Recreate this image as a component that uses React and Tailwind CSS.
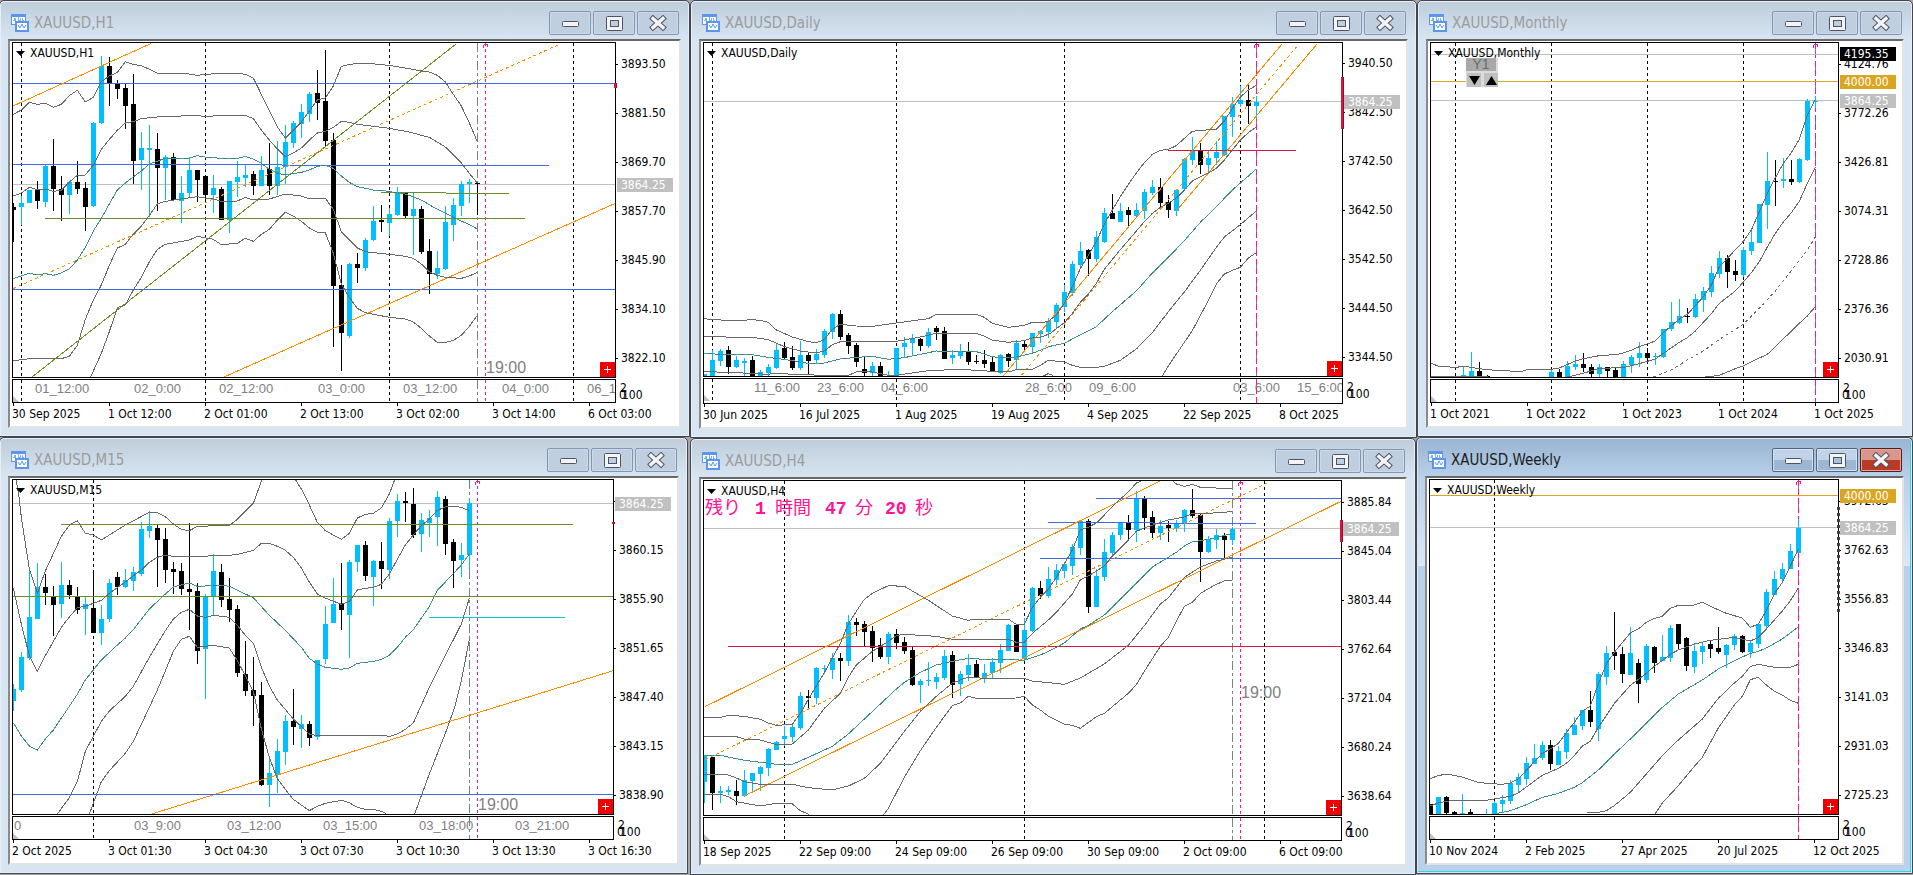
import React from 'react';
import clsx from 'clsx';

const BLUE = '#4169e1';
const OLIVE = '#6b8e23';
const ORANGE = '#ff8c00';
const CRIMSON = '#dc143c';
const SILVER = '#c0c0c0';
const GOLD = '#daa520';
const PINK = '#ff1493';
const BAND = '#696969';

// Candles are 8px apart. Series values are stored in thirds of a pixel,
// measured from each chart's own origin.
const STEP = 8;
const UNIT = 3;
const FAR = 4000;

// candle: [up, high, bodyTop, bodyBottom, low]
// line: [color, x1, y1, x2, y2, dashed]
const H1 = {
  symbol: 'XAUUSD,H1',
  origin: [39, 129],
  prices: ['3893.50', '3881.50', '3869.70', '3857.70', '3845.90', '3834.10', '3822.10'],
  tags: [{ text: '3864.25', top: 136, bg: SILVER }],
  mark: { top: 41, height: 5 },
  dates: ['30 Sep 2025', '1 Oct 12:00', '2 Oct 01:00', '2 Oct 13:00', '3 Oct 02:00', '3 Oct 14:00', '6 Oct 03:00'],
  periods: [1, 24, 47, 70],
  nowSlot: 58,
  nextSlot: 59,
  clock: { text: '19:00', x: 473, y: 330 },
  subLabels: [[22, '01_12:00'], [121, '02_0:00'], [206, '02_12:00'], [305, '03_0:00'], [390, '03_12:00'], [489, '04_0:00'], [574, '06_12:00']],
  priceLines: [553],
  candles: [
    [0, 609, 621, 630, 725], [1, 588, 609, 621, 674], [1, 570, 570, 609, 609], [0, 543, 570, 603, 627],
    [1, 492, 498, 606, 621], [0, 417, 498, 567, 633], [0, 528, 567, 585, 663], [1, 545, 545, 585, 642],
    [0, 483, 545, 567, 582], [0, 546, 564, 621, 693], [1, 366, 369, 618, 621], [1, 168, 197, 369, 372],
    [0, 171, 198, 249, 318], [0, 240, 250, 266, 297], [0, 252, 264, 318, 387], [0, 222, 312, 483, 552],
    [1, 396, 444, 480, 570], [1, 375, 444, 450, 650], [0, 399, 447, 503, 633], [1, 465, 471, 503, 600],
    [0, 459, 471, 601, 602], [1, 528, 579, 603, 669], [1, 472, 510, 579, 591], [0, 510, 510, 540, 606],
    [0, 528, 528, 585, 606], [1, 525, 564, 585, 639], [0, 561, 567, 660, 660], [1, 543, 543, 660, 699],
    [1, 483, 531, 546, 591], [1, 495, 525, 534, 561], [0, 513, 522, 558, 585], [1, 468, 510, 558, 558],
    [0, 429, 507, 558, 585], [1, 423, 501, 558, 585], [1, 375, 426, 502, 552], [1, 363, 369, 429, 444],
    [1, 312, 336, 372, 414], [1, 276, 282, 342, 366], [0, 210, 279, 309, 360], [0, 150, 303, 423, 438],
    [0, 399, 420, 858, 1041], [0, 795, 855, 999, 1113], [1, 789, 792, 1008, 1014], [0, 759, 792, 804, 849],
    [1, 714, 720, 804, 813], [1, 618, 663, 720, 723], [0, 615, 660, 666, 696], [1, 624, 642, 669, 708],
    [1, 561, 576, 645, 648], [0, 576, 576, 648, 654], [1, 579, 627, 648, 765], [0, 618, 627, 756, 762],
    [0, 717, 753, 822, 882], [1, 753, 804, 822, 837], [1, 618, 666, 807, 810], [1, 594, 615, 675, 723],
    [1, 543, 552, 618, 648], [1, 537, 546, 552, 609], [0, 549, 549, 552, 645],
  ],
  lines: [
    [BLUE, 39, 250, FAR, 250], [BLUE, 39, 493, 846, 493], [BLUE, 846, 496, 1647, 496], [BLUE, 39, 868, FAR, 868],
    [OLIVE, 135, 655, 1575, 655], [OLIVE, 1143, 577, 1338, 577], [OLIVE, 1338, 580, 1527, 580],
    [OLIVE, 96, 1131, 1368, 132], [ORANGE, 39, 318, 452, 131], [ORANGE, 672, 1131, 1848, 609],
    [ORANGE, 39, 866, 1683, 131, true],
  ],
  bands: [
    '40,343 64,330 88,307 112,313 136,310 160,322 184,313 208,287 232,271 256,306 280,292 304,245 328,228 352,217 376,185 400,193 424,197 448,208 472,220 568,222 592,226 616,223 664,220 712,220 736,223 760,234 832,381 856,414 904,366 952,300 976,294 1000,258 1024,199 1048,193 1080,190 1108,190 1140,194 1168,196 1216,204 1260,212 1288,216 1312,226 1336,246 1360,283 1384,318 1408,369 1432,425',
    '40,588 64,579 88,562 112,569 136,567 160,574 184,571 208,546 232,526 256,525 280,495 304,448 328,418 352,391 376,369 400,365 424,356 448,353 496,349 544,348 592,346 616,350 664,346 736,346 760,356 784,390 808,420 832,447 856,471 880,459 904,444 928,420 952,399 976,394 1000,382 1024,364 1048,367 1072,373 1120,379 1168,385 1216,394 1240,399 1264,406 1288,412 1336,441 1384,489 1408,520 1432,549',
    '40,1082 88,1076 184,1076 208,1069 232,1036 256,958 280,900 304,855 328,796 352,744 376,733 400,702 424,678 448,646 472,612 496,604 544,597 592,590 616,594 640,596 664,604 712,603 736,592 760,600 808,597 856,582 904,588 928,597 976,595 1000,628 1024,695 1048,720 1072,744 1096,755 1168,763 1216,769 1240,775 1264,792 1288,815 1312,826 1336,832 1384,835 1408,828 1432,817',
    '272,1131 304,1060 328,995 352,923 376,915 400,870 424,832 448,786 472,748 496,733 568,720 592,709 640,718 664,734 712,730 736,715 760,724 784,703 808,688 832,660 856,636 880,648 904,664 928,684 952,696 976,698 1000,760 1024,852 1048,892 1072,925 1096,938 1168,952 1216,957 1240,966 1264,985 1288,1008 1312,1027 1336,1027 1360,1021 1384,1006 1408,979 1432,946',
  ],
  mid: '40,836 88,820 112,824 136,821 160,826 184,819 208,807 232,780 256,742 280,693 304,655 328,612 352,570 376,549 400,531 424,513 448,492 472,484 496,474 568,474 592,467 616,471 664,475 712,475 736,469 760,477 784,490 808,508 832,520 856,525 904,517 928,510 952,499 976,496 1000,505 1024,528 1048,547 1072,560 1096,565 1120,570 1144,570 1168,575 1216,582 1264,600 1312,628 1360,652 1408,674 1432,687',
};

const DAILY = {
  symbol: 'XAUUSD,Daily',
  origin: [42, 129],
  prices: ['3940.50', '3842.50', '3742.50', '3642.50', '3542.50', '3444.50', '3344.50'],
  pricesHigh: true,
  tags: [{ text: '3864.25', top: 53, bg: SILVER }],
  mark: { top: 35, height: 52 },
  dates: ['30 Jun 2025', '16 Jul 2025', '1 Aug 2025', '19 Aug 2025', '4 Sep 2025', '22 Sep 2025', '8 Oct 2025'],
  periods: [1, 24, 45, 67],
  nowSlot: 69,
  nextSlot: 69,
  subLabels: [[50, '11_6:00'], [113, '23_6:00'], [177, '04_6:00'], [321, '28_6:00'], [385, '09_6:00'], [529, '03_6:00'], [593, '15_6:00']],
  priceLines: [304],
  candles: [
    [1, 1122, 1122, 1140, 1140], [1, 1050, 1080, 1140, 1140], [1, 1047, 1053, 1083, 1098], [0, 1038, 1050, 1101, 1122],
    [1, 1068, 1080, 1101, 1104], [1, 1074, 1083, 1088, 1135], [0, 1068, 1080, 1140, 1140], [1, 1110, 1116, 1140, 1140],
    [1, 1092, 1101, 1119, 1128], [1, 1032, 1050, 1104, 1107], [0, 1026, 1044, 1074, 1077], [0, 1038, 1071, 1104, 1110],
    [1, 1023, 1065, 1104, 1110], [0, 1059, 1065, 1083, 1122], [1, 1047, 1062, 1080, 1092], [1, 987, 993, 1065, 1074],
    [1, 939, 942, 996, 1017], [0, 930, 942, 1011, 1020], [0, 999, 1005, 1038, 1062], [0, 1029, 1035, 1086, 1101],
    [0, 1071, 1107, 1119, 1130], [1, 1086, 1098, 1119, 1130], [0, 1086, 1098, 1140, 1140], [1, 1113, 1140, 1143, 1143],
    [1, 1044, 1044, 1140, 1140], [1, 1011, 1029, 1041, 1074], [1, 1002, 1017, 1029, 1065], [0, 1014, 1017, 1038, 1053],
    [1, 984, 996, 1038, 1044], [0, 978, 984, 996, 1020], [0, 981, 993, 1077, 1077], [1, 1050, 1065, 1074, 1092],
    [1, 1032, 1053, 1068, 1077], [0, 1026, 1053, 1086, 1095], [0, 1065, 1083, 1085, 1092], [0, 1050, 1080, 1092, 1104],
    [0, 1071, 1086, 1113, 1116], [1, 1062, 1065, 1119, 1122], [0, 1059, 1062, 1083, 1101], [1, 1020, 1029, 1080, 1107],
    [0, 1023, 1032, 1041, 1050], [1, 999, 999, 1041, 1059], [1, 990, 993, 1002, 1029], [1, 954, 963, 996, 1014],
    [1, 909, 915, 966, 984], [1, 855, 876, 921, 936], [1, 783, 792, 879, 888], [1, 726, 753, 795, 804],
    [0, 747, 750, 777, 828], [1, 693, 711, 777, 786], [1, 624, 639, 726, 729], [0, 582, 639, 657, 657],
    [1, 609, 633, 666, 666], [0, 621, 630, 645, 678], [1, 609, 630, 648, 654], [1, 567, 576, 633, 657],
    [1, 540, 561, 579, 585], [0, 534, 561, 609, 627], [0, 585, 606, 630, 654], [1, 567, 570, 633, 648],
    [1, 474, 477, 567, 573], [1, 411, 453, 480, 495], [0, 429, 453, 495, 522], [1, 450, 474, 495, 516],
    [1, 423, 456, 474, 495], [1, 348, 348, 465, 468], [1, 291, 312, 351, 411], [1, 258, 300, 312, 321],
    [0, 252, 300, 318, 372], [1, 288, 306, 318, 357],
  ],
  lines: [
    [CRIMSON, 1435, 451, 1818, 451], [ORANGE, 940, 1128, 1776, 132],
    [ORANGE, 995, 1125, 1820, 140, true], [ORANGE, 1459, 633, 1881, 132],
  ],
  bands: [
    '42,956 67,959 139,962 187,959 211,961 235,967 259,990 307,1011 355,1025 379,1028 403,1019 427,988 451,973 499,978 547,979 619,969 715,956 739,943 787,945 859,943 883,952 907,970 955,982 1003,976 1027,967 1051,969 1075,964 1099,945 1123,910 1147,860 1171,806 1195,766 1219,725 1243,672 1267,630 1291,590 1315,553 1339,519 1363,488 1387,463 1411,451 1435,448 1459,437 1483,415 1507,394 1531,391 1579,388 1603,363 1627,326 1651,291 1675,270 1699,256',
    '42,1009 139,1012 187,1012 235,1019 283,1040 331,1053 379,1059 403,1053 427,1034 451,1025 619,1024 691,1011 739,1000 859,1000 883,1008 907,1020 955,1027 1003,1022 1027,1014 1051,1012 1080,1001 1099,986 1123,968 1147,940 1171,907 1195,882 1219,850 1243,808 1291,749 1339,693 1363,665 1387,640 1411,622 1435,610 1459,594 1483,570 1507,543 1555,519 1579,505 1603,480 1627,450 1651,420 1675,398 1699,381',
    '42,1115 120,1117 235,1123 259,1119 307,1123 403,1126 475,1126 499,1116 523,1113 547,1116 595,1126 619,1126 667,1119 715,1112 811,1108 907,1114 955,1116 979,1109 1027,1108 1051,1096 1075,1081 1123,1086 1147,1096 1171,1102 1219,1102 1243,1099 1291,1081 1339,1047 1387,998 1435,935 1483,876 1531,811 1579,742 1603,711 1651,674 1699,633',
    '1060,1128 1075,1121 1090,1127',
    '1417,1128 1435,1098 1483,1027 1507,992 1555,901 1579,852 1603,822 1627,811 1651,802 1675,774 1699,758',
  ],
  mid: '42,1060 91,1063 187,1064 235,1072 331,1085 355,1091 403,1089 451,1077 499,1072 547,1069 595,1078 643,1073 739,1053 859,1055 883,1062 907,1070 931,1073 979,1071 1027,1060 1080,1039 1123,1030 1171,1004 1219,980 1267,935 1339,873 1387,819 1435,772 1483,722 1531,667 1579,620 1627,570 1675,528 1699,507',
};

const MONTHLY = {
  symbol: 'XAUUSD,Monthly',
  origin: [48, 129],
  prices: ['4124.76', '3772.26', '3426.81', '3074.31', '2728.86', '2376.36', '2030.91'],
  tags: [
    { text: '4195.35', top: 5, bg: '#000000' },
    { text: '4000.00', top: 33, bg: GOLD },
    { text: '3864.25', top: 52, bg: SILVER },
  ],
  dates: ['1 Oct 2021', '1 Oct 2022', '1 Oct 2023', '1 Oct 2024', '1 Oct 2025'],
  periods: [3, 15, 27, 39],
  nowSlot: 48,
  nextSlot: 48,
  yearBox: true,
  subLabels: [],
  priceLines: [163, 301],
  candles: [
    null, null, null, null,
    [1, 1098, 1125, 1140, 1140], [1, 1056, 1113, 1140, 1140], [0, 1086, 1113, 1140, 1140], [0, 1125, 1129, 1140, 1140],
    null, null, null, null, null, null, null,
    [1, 1106, 1116, 1140, 1140], [0, 1107, 1116, 1140, 1140], [1, 1083, 1098, 1140, 1140], [1, 1065, 1092, 1101, 1110],
    [0, 1059, 1092, 1104, 1116], [0, 1093, 1101, 1122, 1140], [1, 1092, 1101, 1122, 1131], [0, 1101, 1101, 1113, 1131],
    [0, 1104, 1110, 1140, 1140], [1, 1083, 1092, 1140, 1140], [1, 1065, 1071, 1095, 1119], [1, 1026, 1059, 1074, 1101],
    [0, 1044, 1059, 1074, 1086], [1, 1059, 1068, 1071, 1095], [1, 987, 987, 1071, 1074], [1, 906, 966, 987, 993],
    [1, 897, 948, 969, 972], [0, 924, 948, 950, 969], [1, 882, 897, 951, 954], [1, 861, 873, 900, 936],
    [1, 798, 819, 876, 891], [1, 753, 774, 822, 834], [0, 765, 774, 816, 864], [0, 780, 813, 825, 843],
    [1, 741, 750, 825, 831], [1, 684, 726, 753, 765], [1, 612, 612, 729, 729], [1, 456, 543, 615, 687],
    [0, 480, 543, 545, 618], [1, 474, 537, 543, 564], [0, 480, 537, 546, 555], [1, 474, 477, 546, 549],
    [1, 297, 303, 480, 483], [1, 288, 302, 305, 324],
  ],
  lines: [[GOLD, 48, 244, FAR, 244]],
  bands: [
    '48,1090 72,1099 121,1102 150,1099 200,1107 250,1112 320,1114 340,1108 409,1108 433,1104 481,1083 505,1076 553,1067 610,1063 649,1051 673,1040 721,1023 745,998 793,957 817,943 841,917 865,890 889,855 913,800 937,775 985,724 1009,690 1033,635 1057,580 1081,533 1105,490 1129,458 1153,418 1177,345 1200,300',
    '48,1130 220,1130 M457,1131 505,1120 553,1105 625,1103 673,1091 721,1077 745,1060 793,1027 817,1013 841,993 889,941 913,910 961,873 985,846 1009,818 1033,785 1057,741 1081,700 1105,666 1129,638 1153,604 1177,550 1201,501',
    '870,1131 913,1126 961,1106 985,1098 1009,1085 1057,1063 1081,1040 1153,970 1177,948 1200,921',
  ],
  midDashed: '715,1131 769,1110 817,1080 865,1053 913,1018 985,973 1033,925 1081,873 1129,812 1177,750 1200,713',
};

const M15 = {
  symbol: 'XAUUSD,M15',
  origin: [39, 138],
  prices: ['', '3860.15', '3855.90', '3851.65', '3847.40', '3843.15', '3838.90'],
  tags: [{ text: '3864.25', top: 18, bg: SILVER }],
  mark: { top: 43, height: 2 },
  dates: ['2 Oct 2025', '3 Oct 01:30', '3 Oct 04:30', '3 Oct 07:30', '3 Oct 10:30', '3 Oct 13:30', '3 Oct 16:30'],
  periods: [10],
  nowSlot: 57,
  nextSlot: 58,
  clock: { text: '19:00', x: 465, y: 330 },
  subLabels: [[1, '0'], [121, '03_9:00'], [214, '03_12:00'], [310, '03_15:00'], [406, '03_18:00'], [502, '03_21:00']],
  priceLines: [208],
  candles: [
    [1, 750, 765, 801, 831], [1, 654, 669, 768, 774], [1, 411, 549, 672, 678], [1, 387, 459, 555, 555],
    [0, 420, 459, 477, 513], [0, 456, 486, 513, 606], [1, 384, 453, 510, 552], [0, 438, 453, 483, 495],
    [0, 459, 486, 528, 540], [1, 489, 510, 525, 603], [0, 408, 522, 597, 597], [1, 513, 555, 597, 633],
    [1, 435, 447, 555, 564], [0, 414, 429, 459, 483], [1, 405, 438, 459, 462], [1, 399, 414, 441, 471],
    [1, 264, 285, 420, 426], [1, 231, 276, 291, 312], [0, 273, 282, 318, 459], [0, 282, 315, 408, 447],
    [0, 384, 405, 414, 480], [0, 387, 411, 465, 483], [0, 267, 465, 474, 588], [0, 447, 471, 651, 690],
    [1, 480, 486, 645, 795], [1, 360, 411, 486, 546], [0, 390, 414, 498, 519], [0, 432, 495, 528, 564],
    [0, 513, 525, 717, 729], [0, 621, 720, 771, 786], [0, 669, 768, 786, 876], [0, 744, 783, 1053, 1056],
    [1, 966, 1017, 1053, 1119], [1, 915, 951, 1023, 1077], [1, 843, 861, 954, 993], [0, 765, 861, 879, 933],
    [1, 843, 870, 885, 942], [0, 861, 870, 912, 936], [1, 678, 678, 909, 918], [1, 516, 570, 675, 690],
    [1, 432, 510, 567, 567], [0, 387, 507, 528, 588], [1, 378, 384, 543, 672], [1, 333, 333, 384, 414],
    [0, 321, 333, 426, 441], [1, 378, 381, 429, 516], [0, 324, 381, 405, 465], [1, 252, 261, 408, 435],
    [1, 180, 201, 261, 309], [0, 174, 201, 207, 264], [0, 162, 209, 303, 312], [1, 237, 258, 300, 354],
    [1, 228, 252, 267, 309], [1, 171, 189, 249, 336], [0, 186, 195, 330, 363], [0, 315, 324, 381, 462],
    [1, 327, 363, 378, 429], [1, 192, 208, 363, 408],
  ],
  lines: [
    [OLIVE, 184, 271, 1719, 271], [OLIVE, 39, 487, FAR, 487], ['#00ced1', 1287, 550, 1695, 550],
    [ORANGE, 455, 1140, 1843, 709], [BLUE, 39, 1081, FAR, 1081],
  ],
  bands: [
    '48,138 56,180 64,250 88,405 112,478 136,411 160,359 184,307 208,274 232,260 256,298 280,303 304,318 328,303 376,273 448,235 472,236 496,248 520,270 544,286 568,290 592,277 688,274 712,256 736,232 760,208 784,142 790,132',
    '883,132 904,165 928,213 952,265 976,290 1024,316 1048,298 1072,252 1096,241 1120,238 1144,222 1168,180 1186,132',
    '40,463 64,570 88,665 112,712 136,665 184,580 208,549 232,521 256,517 304,499 328,478 376,444 424,408 448,385 472,370 496,363 520,367 616,367 640,364 688,364 712,361 760,349 784,328 808,328 832,337 856,349 880,370 904,402 928,444 952,480 976,492 1024,511 1048,502 1072,468 1096,463 1120,460 1144,451 1168,420 1192,376 1216,333 1240,303 1264,275 1288,255 1312,229 1336,219 1360,217 1384,220 1408,230',
    '172,1140 208,1091 232,1043 256,952 304,862 328,831 376,787 400,757 448,670 496,590 520,555 544,535 568,526 592,546 616,550 640,544 688,550 712,574 736,604 760,628 784,700 808,756 832,798 880,855 928,900 952,905 1158,905 1168,908 1192,900 1216,886 1240,867 1288,760 1312,712 1384,570 1408,493',
    '268,1140 304,1043 328,1010 376,958 400,922 448,820 472,768 496,711 520,652 544,616 568,607 592,640 640,634 688,642 712,680 736,725 760,772 784,885 808,970 832,1034 856,1066 880,1096 928,1130 952,1117 976,1108 1024,1099 1048,1106 1072,1120 1096,1126 1120,1126 1144,1132 1158,1139',
    '1244,1140 1264,1085 1288,1020 1336,898 1364,820 1384,740 1408,616',
  ],
  mid: '40,866 64,906 88,936 112,948 136,915 160,888 208,817 232,781 256,738 304,678 352,633 376,612 400,587 448,525 496,480 520,459 544,453 568,447 592,457 664,454 688,457 712,469 760,491 808,544 856,589 904,640 928,673 952,690 976,700 1024,706 1048,702 1072,688 1120,682 1144,676 1168,664 1192,640 1216,610 1240,587 1288,518 1312,469 1360,419 1384,393 1408,360',
};

const H4 = {
  symbol: 'XAUUSD,H4',
  origin: [42, 141],
  prices: ['3885.84', '3845.04', '3803.44', '3762.64', '3721.04', '3680.24', '3638.64'],
  tags: [{ text: '3864.25', top: 42, bg: SILVER }],
  mark: { top: 40, height: 22 },
  dates: ['18 Sep 2025', '22 Sep 09:00', '24 Sep 09:00', '26 Sep 09:00', '30 Sep 09:00', '2 Oct 09:00', '6 Oct 09:00'],
  periods: [10, 40, 70],
  nowSlot: 66,
  nextSlot: 67,
  clock: { text: '19:00', x: 537, y: 217 },
  countdown: true,
  subLabels: [],
  priceLines: [283],
  candles: [
    [1, 966, 966, 1044, 1107], [0, 966, 969, 1077, 1128], [1, 1056, 1071, 1077, 1107], [1, 1056, 1068, 1074, 1083],
    [0, 1038, 1071, 1086, 1113], [1, 1008, 1038, 1086, 1089], [1, 1017, 1017, 1041, 1071], [1, 996, 999, 1020, 1071],
    [1, 942, 945, 1002, 1026], [1, 921, 924, 948, 948], [1, 876, 906, 915, 936], [1, 870, 879, 909, 924],
    [1, 774, 786, 882, 888], [0, 768, 786, 792, 828], [1, 699, 702, 792, 810], [1, 693, 702, 705, 720],
    [1, 657, 672, 708, 735], [0, 657, 672, 681, 741], [1, 543, 564, 681, 696], [0, 552, 564, 573, 606],
    [0, 561, 570, 594, 636], [0, 576, 591, 642, 684], [0, 612, 633, 669, 675], [1, 594, 600, 669, 690],
    [0, 585, 600, 627, 645], [0, 609, 624, 651, 660], [0, 639, 648, 753, 756], [1, 735, 741, 753, 807],
    [1, 684, 738, 742, 756], [1, 717, 729, 744, 765], [1, 648, 666, 732, 738], [0, 651, 663, 753, 792],
    [1, 711, 720, 750, 786], [1, 660, 693, 723, 741], [0, 678, 690, 732, 732], [1, 690, 717, 732, 747],
    [1, 672, 684, 717, 732], [1, 630, 648, 687, 717], [1, 570, 573, 651, 651], [0, 573, 573, 654, 654],
    [1, 552, 588, 675, 678], [1, 459, 462, 591, 594], [0, 441, 462, 486, 495], [1, 399, 435, 486, 492],
    [1, 390, 408, 438, 453], [1, 387, 390, 411, 432], [1, 330, 339, 396, 423], [1, 258, 261, 342, 363],
    [0, 255, 261, 519, 537], [1, 405, 426, 519, 519], [1, 315, 354, 429, 441], [1, 294, 303, 357, 369],
    [1, 264, 264, 303, 318], [0, 243, 264, 288, 315], [1, 171, 192, 288, 324], [0, 186, 192, 252, 288],
    [0, 231, 249, 297, 312], [1, 258, 276, 297, 318], [0, 261, 273, 282, 324], [1, 258, 267, 282, 294],
    [1, 225, 228, 270, 294], [0, 165, 228, 246, 252], [0, 240, 243, 354, 444], [1, 306, 315, 354, 357],
    [1, 285, 303, 318, 345], [0, 297, 306, 318, 375], [1, 279, 285, 318, 333],
  ],
  lines: [
    [BLUE, 1218, 193, FAR, 193], [BLUE, 1074, 265, 1388, 265], [BLUE, 1388, 268, 1698, 268],
    [BLUE, 1050, 373, FAR, 373], [CRIMSON, 115, 637, FAR, 637],
    [ORANGE, 45, 818, 1411, 141], [ORANGE, 163, 1086, 1957, 200], [ORANGE, 45, 978, 1731, 147, true],
  ],
  bands: [
    '42,849 91,850 115,844 163,847 211,856 235,867 259,874 307,871 331,838 355,796 403,716 427,672 451,628 475,570 499,532 523,496 547,478 595,455 643,457 715,499 787,546 835,559 859,555 955,555 979,571 1003,571 1027,520 1051,490 1075,465 1099,430 1147,348 1171,288 1195,280 1219,267 1243,243 1267,218 1291,195 1315,174 1339,147 1358,139',
    '1446,139 1459,150 1483,157 1507,151 1531,160 1579,162 1603,165 1627,162',
    '42,907 139,908 163,915 211,918 259,932 307,930 355,888 403,823 451,778 475,730 499,693 547,652 595,622 619,605 643,601 739,607 787,616 955,616 979,625 1003,625 1027,598 1075,558 1099,535 1147,480 1171,438 1195,426 1219,411 1243,396 1267,366 1315,318 1339,292 1363,282 1411,266 1435,258 1483,249 1507,238 1555,238 1627,233',
    '42,1022 115,1023 139,1032 163,1043 211,1051 307,1051 355,1061 427,1068 475,1056 523,1033 571,988 643,892 691,832 739,787 787,747 835,729 907,735 931,733 1003,733 1027,741 1123,751 1171,732 1243,690 1315,634 1363,575 1411,510 1435,492 1483,430 1531,399 1579,381 1627,370',
    '42,1081 91,1080 115,1088 139,1103 211,1116 259,1108 307,1110 331,1130 357,1141',
    '580,1143 595,1123 643,1030 691,950 739,880 787,815 811,807 835,787 859,793 979,792 1003,787 1027,813 1051,828 1075,846 1105,862 1123,871 1147,874 1171,883 1219,848 1243,838 1315,778 1339,752 1363,712 1411,637 1435,610 1459,562 1483,517 1507,505 1531,478 1579,451 1603,441 1627,439',
  ],
  mid: '42,964 91,964 163,979 211,985 259,991 307,991 355,970 427,937 475,900 523,855 571,810 619,765 643,745 691,715 739,693 787,682 835,673 883,676 955,676 1003,679 1051,663 1080,650 1123,627 1171,585 1195,574 1243,543 1291,495 1339,447 1387,399 1459,355 1483,336 1507,324 1555,316 1603,304 1627,300',
};

const WEEKLY = {
  symbol: 'XAUUSD,Weekly',
  origin: [45, 138],
  prices: ['3972.63', '3762.63', '3556.83', '3346.83', '3141.03', '2931.03', '2725.23'],
  tags: [
    { text: '4000.00', top: 10, bg: GOLD },
    { text: '3864.25', top: 42, bg: SILVER },
  ],
  dottedMark: true,
  dates: ['10 Nov 2024', '2 Feb 2025', '27 Apr 2025', '20 Jul 2025', '12 Oct 2025'],
  periods: [8],
  nowSlot: 46,
  nextSlot: 46,
  subLabels: [],
  priceLines: [280],
  candles: [
    [0, 1110, 1110, 1150, 1150], [1, 1089, 1089, 1150, 1150], [0, 1086, 1089, 1137, 1140], [0, 1131, 1134, 1150, 1150],
    [1, 1080, 1137, 1150, 1150], [0, 1125, 1134, 1150, 1150], null, [1, 1125, 1150, 1153, 1153],
    [1, 1101, 1107, 1150, 1150], [1, 1083, 1098, 1110, 1137], [1, 1038, 1048, 1101, 1110], [1, 1017, 1029, 1053, 1077],
    [1, 969, 987, 1035, 1053], [1, 930, 972, 990, 990], [1, 921, 933, 972, 978], [0, 918, 933, 990, 1008],
    [1, 936, 951, 993, 993], [1, 885, 897, 954, 975], [1, 849, 873, 903, 903], [1, 828, 828, 876, 888],
    [0, 771, 828, 864, 879], [1, 714, 720, 885, 921], [1, 636, 657, 729, 753], [0, 534, 654, 666, 708],
    [0, 639, 660, 720, 747], [1, 579, 657, 723, 723], [0, 675, 687, 750, 807], [1, 630, 636, 738, 747],
    [0, 636, 639, 687, 717], [1, 603, 669, 681, 681], [1, 573, 582, 672, 684], [0, 570, 570, 630, 648],
    [0, 609, 612, 696, 711], [1, 630, 651, 699, 717], [1, 627, 636, 654, 690], [0, 621, 630, 645, 672],
    [0, 579, 642, 654, 660], [1, 630, 633, 663, 702], [1, 600, 606, 633, 648], [0, 603, 606, 654, 657],
    [1, 618, 627, 654, 672], [1, 567, 570, 630, 642], [1, 465, 474, 576, 582], [1, 411, 435, 483, 483],
    [1, 387, 405, 435, 447], [1, 330, 351, 405, 405], [1, 255, 282, 357, 357],
  ],
  lines: [[GOLD, 45, 184, FAR, 184]],
  bands: [
    '45,1034 70,1025 94,1020 142,1029 190,1045 214,1048 262,1051 286,1047 310,1035 334,1009 382,958 406,945 430,928 478,865 502,832 526,816 550,750 574,690 598,655 646,597 670,585 694,565 718,553 742,547 766,523 790,514 838,513 862,505 886,517 934,538 982,552 1006,580 1030,570 1054,530 1078,480 1102,445 1126,396 1150,346',
    '45,1116 70,1107 94,1102 118,1099 214,1099 286,1087 310,1077 334,1059 382,1024 430,1003 454,988 478,965 502,936 526,922 550,880 574,845 598,808 646,754 694,718 718,697 766,661 790,648 838,630 886,619 958,610 1006,621 1030,610 1054,585 1102,531 1126,500 1150,462',
    '515,1137 550,1135 574,1130 598,1115 646,1075 694,1020 742,965 790,918 862,855 910,793 958,747 982,727 1006,697 1030,691 1078,700 1126,700 1150,691',
    '720,1140 742,1107 790,1055 838,997 862,970 910,882 958,813 982,787 1006,737 1030,730 1054,753 1078,771 1102,783 1126,799 1150,808',
  ],
  mid: '238,1140 286,1130 334,1112 382,1090 430,1078 478,1060 502,1046 550,1008 598,960 646,915 694,868 742,820 790,780 862,738 910,705 958,680 1006,658 1030,652 1054,642 1102,615 1126,597 1150,579',
};

const slotX = (slot) => slot * STEP + 0.5;

// Vertical separators shared by the price pane and the indicator pane
function TimeLines({ chart }) {
  const { periods, nowSlot, nextSlot } = chart;
  const together = nowSlot === nextSlot;
  return (
    <g strokeWidth="1" shapeRendering="crispEdges">
      {periods.map((slot) => (
        <line key={slot} x1={slotX(slot)} x2={slotX(slot)} y1="0" y2="600" stroke="#000" strokeDasharray="3 3" />
      ))}
      <line x1={slotX(nowSlot)} x2={slotX(nowSlot)} y1="0" y2="600" stroke="#808080" strokeDasharray="9 3 3 3" />
      <line x1={slotX(nextSlot)} x2={slotX(nextSlot)} y1="0" y2="600" stroke={PINK} strokeDasharray={together ? '6 3' : '3 3'} />
    </g>
  );
}

function PricePlot({ chart }) {
  const [x0, y0] = chart.origin;
  const snap = (y) => y0 + Math.floor((y - y0) / UNIT) * UNIT + UNIT / 2;
  const nextX = slotX(chart.nextSlot);

  return (
    <svg className="absolute inset-0 h-full w-full" aria-label={`${chart.symbol} price chart`} role="img">
      <TimeLines chart={chart} />
      <g transform={`scale(${1 / UNIT}) translate(${-x0} ${-y0})`} shapeRendering="crispEdges" strokeWidth="3" fill="none">
        {chart.priceLines.map((y) => (
          <line key={y} x1={x0} x2={FAR} y1={snap(y)} y2={snap(y)} stroke={SILVER} />
        ))}
        {chart.candles.map((candle, i) => {
          if (!candle) return null;
          const [up, high, top, bottom, low] = candle;
          const cx = x0 + i * STEP * UNIT + 1.5;
          return (
            <g key={i} fill={up ? '#00bfff' : '#000'}>
              <rect x={cx - 1.5} y={high} width="3" height={low - high} />
              <rect x={cx - 7.5} y={top} width="15" height={Math.max(bottom - top, 3)} />
            </g>
          );
        })}
        {chart.lines.map(([color, x1, y1, x2, y2, dashed], i) => (
          <line
            key={i}
            x1={x1}
            x2={x2}
            y1={y1 === y2 ? snap(y1) : y1}
            y2={y1 === y2 ? snap(y2) : y2}
            stroke={color}
            strokeDasharray={dashed ? '9 9' : 'none'}
          />
        ))}
        {chart.bands.map((points) => (
          <path key={points} d={`M${points}`} stroke={BAND} />
        ))}
        {chart.mid && <path d={`M${chart.mid}`} stroke={BAND} />}
        {chart.mid && <path d={`M${chart.mid}`} stroke="#20b2aa" strokeDasharray="12 12" />}
        {chart.midDashed && <path d={`M${chart.midDashed}`} stroke={BAND} strokeDasharray="9 9" />}
      </g>
      <path d={`M${nextX - 2} 5v-4h4v4`} fill="none" stroke={PINK} strokeDasharray="3 1" shapeRendering="crispEdges" />
      {chart.clock && (
        <text x={chart.clock.x} y={chart.clock.y} fontSize="16" fill="#808080" fontFamily="'Liberation Sans', sans-serif">
          {chart.clock.text}
        </text>
      )}
    </svg>
  );
}

function IndicatorPlot({ chart }) {
  return (
    <svg className="absolute inset-0 h-full w-full" aria-label={`${chart.symbol} time marks`} role="img">
      <path d="M0 16l6 6H0z" fill="#c0c0c0" />
      {chart.subLabels.map(([x, text]) => (
        <text key={x} x={x} y="13" fontSize="13" fill="#808080" fontFamily="'Liberation Sans', sans-serif">
          {text}
        </text>
      ))}
      <TimeLines chart={chart} />
    </svg>
  );
}

function Countdown() {
  return (
    <p className="relative flex pl-px font-['Liberation_Mono','Noto_Sans_CJK_JP',monospace] text-[18px] leading-5 text-[#ff1493]">
      <span className="w-[50px]">残り</span>
      <span className="w-5 font-bold">1</span>
      <span className="w-[50px]">時間</span>
      <span className="w-[30px] font-bold">47</span>
      <span className="w-[30px]">分</span>
      <span className="w-[30px] font-bold">20</span>
      <span>秒</span>
    </p>
  );
}

function YearBox() {
  return (
    <div className="absolute top-[15px] left-[35px] w-8 bg-[#dcdcdc]">
      <div className="h-[13px] w-[30px] bg-[#a9a9a9] text-center font-['Liberation_Sans',sans-serif] text-[14px] leading-[13px] text-[#696969]">
        Y1
      </div>
      <div className="flex justify-between pt-0.5 pl-px">
        <button aria-label="Previous year" className="flex h-3.5 w-3.5 items-center justify-center bg-[#c0c0c0]">
          <svg width="11" height="9"><path d="M0 0h11L5.500 9z" /></svg>
        </button>
        <button aria-label="Next year" className="flex h-3.5 w-3.5 items-center justify-center bg-[#c0c0c0]">
          <svg width="11" height="9"><path d="M0 9h11L5.500 0z" /></svg>
        </button>
      </div>
    </div>
  );
}

function PriceAxis({ chart }) {
  return (
    <div className="relative">
      {chart.mark && (
        <div
          className="absolute -left-0.5 w-[3px] border-r border-[#8a1030] bg-[#dc143c]"
          style={{ top: chart.mark.top, height: chart.mark.height }}
        />
      )}
      {chart.dottedMark && <div className="absolute top-7 -left-0.5 h-[105px] border-l-3 border-dotted border-[#404040]" />}
      <ul className={clsx('text-[12px] leading-4', chart.pricesHigh ? 'pt-[13px]' : 'pt-3.5')}>
        {chart.prices.map((price, i) => (
          <li key={i} className="h-[49px] last:h-4">
            <span className="flex h-4 items-center gap-[3px]">
              <i className="h-px w-0.5 bg-black" />
              {price}
            </span>
          </li>
        ))}
      </ul>
      {chart.tags.map((tag) => (
        <span
          key={tag.text}
          className="absolute left-px h-3.5 w-14 pl-1 text-[12px] leading-[14px] text-white"
          style={{ top: tag.top, background: tag.bg }}>
          {tag.text}
        </span>
      ))}
    </div>
  );
}

function WindowIcon() {
  return (
    <svg width="18" height="18" viewBox="0 0 18 18" shapeRendering="crispEdges" aria-hidden="true">
      <rect x="0" y="0" width="15" height="11" fill="#5a96ec" />
      <rect x="1" y="3" width="13" height="7" fill="#fff" />
      <path d="M2 6h1v-2h1v3M7 3v3h2v-2M11 4v2h2" stroke="#7aaef2" fill="none" />
      <rect x="4" y="7" width="14" height="11" fill="#5a96ec" />
      <rect x="6" y="9" width="10" height="7" fill="#fff" />
      <path d="M7 11l2 3 2-4 2 4 2-3" stroke="#5a96ec" fill="none" shapeRendering="auto" />
    </svg>
  );
}

function TitleButton({ label, active, danger, children }) {
  return (
    <button
      aria-label={label}
      className={clsx(
        'flex h-6 w-[42px] items-center justify-center rounded-[2px] border',
        !active && 'border-[#8496b4] bg-[#bfcfe0] shadow-[inset_0_0_0_1px_#cbd9e8]',
        active && !danger && 'border-[#54657f] bg-linear-to-b from-[#c0d3e8] from-50% to-[#9cb6d3] to-50% shadow-[inset_0_0_0_1px_#d3e2f1]',
        active && danger && 'border-[#5b1c1c] bg-linear-to-b from-[#d9968c] from-50% to-[#b93a26] to-50% shadow-[inset_0_0_0_1px_#e0a79d]'
      )}>
      {children}
    </button>
  );
}

function ChartWindow({ chart, active, tall, className }) {
  return (
    <section
      className={clsx(
        'flex min-w-0 flex-col rounded-t-[5px] border border-[#45464c] px-2 pb-2',
        active
          ? 'bg-[linear-gradient(#99b4d1_0,#b9d1ea_40px,#dce8f5_128px,#b9d1ea_128px)] shadow-[inset_0_0_0_1px_#dbe9f7,inset_-1px_-1px_0_1px_#2cd5e8]'
          : 'bg-[linear-gradient(#bfcddb_0,#d7e4f2_38px)] shadow-[inset_0_0_0_1px_#e6eef7]',
        className
      )}>
      <header className="flex h-[38px] shrink-0 items-center gap-0.5 pt-1.5 pr-0.5 pl-[3px]">
        <WindowIcon />
        <h2 className={clsx('flex-1 pl-[3px] text-[15px] leading-5', active ? 'text-[#1c1c1c]' : 'text-[#9c9c9c]')}>
          {chart.symbol}
        </h2>
        <TitleButton label="Minimize" active={active}>
          <svg width="17" height="8"><rect x="0.500" y="2.500" width="16" height="5" rx="1" fill="#f4f4f4" stroke="#4d5468" /></svg>
        </TitleButton>
        <TitleButton label="Maximize" active={active}>
          <svg width="17" height="15" stroke="#4d5468" fill="none">
            <rect x="0.500" y="0.500" width="16" height="14" rx="1" fill="#f4f4f4" />
            <rect x="4.500" y="4.500" width="8" height="6" fill={active ? '#a9c0da' : '#bfcfe0'} />
          </svg>
        </TitleButton>
        <TitleButton label="Close" active={active} danger>
          <svg width="18" height="16" fill="none" strokeLinecap="square">
            <path d="M4 3.500l10 9M14 3.500l-10 9" stroke="#4d5468" strokeWidth="5.500" />
            <path d="M4 3.500l10 9M14 3.500l-10 9" stroke="#f4f4f4" strokeWidth="3.500" />
          </svg>
        </TitleButton>
      </header>

      <div className="grid flex-1 grid-cols-[minmax(0,1fr)_63px] grid-rows-[1fr_auto_auto] border-t-2 border-r-2 border-b-2 border-l-2 border-t-[#696969] border-r-[#e3e3e3] border-b-[#e3e3e3] border-l-[#8a8a8a] bg-white pt-px pl-0.5">
        <div className="relative overflow-hidden border border-black">
          <PricePlot chart={chart} />
          <div className="relative flex items-center gap-[5px] pt-0.5 pl-[3px] text-[12px] leading-4">
            <svg width="9" height="5"><path d="M0 0h9L4.500 5z" /></svg>
            {chart.symbol}
          </div>
          {chart.countdown && <Countdown />}
          {chart.yearBox && <YearBox />}
          <button aria-label="Add" className="absolute right-0 bottom-0 flex h-[15px] w-[15px] items-center justify-center bg-[#f00000]">
            <svg width="7" height="7"><path d="M3 0h1v3h3v1h-3v3h-1v-3h-3v-1h3z" fill="#fff" /></svg>
          </button>
        </div>
        <PriceAxis chart={chart} />

        <div className={clsx('relative mt-px overflow-hidden border border-black', tall ? 'h-[26px]' : 'h-6')}>
          <IndicatorPlot chart={chart} />
        </div>
        <div className="relative mt-px text-[12px] leading-4">
          <span className="absolute top-px left-1">2</span>
          <span className="absolute top-2 left-[3px]">0</span>
          <span className="absolute top-2 left-1.5">100</span>
        </div>

        <ul className="col-span-2 flex h-[23px] text-[12px] leading-4 whitespace-nowrap">
          {chart.dates.map((date) => (
            <li key={date} className="w-24 shrink-0 last:w-auto">
              <i className="ml-px block h-[3px] w-px bg-black" />
              {date}
            </li>
          ))}
        </ul>
      </div>
    </section>
  );
}

export default function App() {
  return (
    <main className="grid min-h-screen grid-cols-[690fr_727fr_496fr] overflow-hidden bg-[#a6a6a6] font-['DejaVu_Sans_Condensed','DejaVu_Sans',sans-serif] text-black">
      <div className="grid min-w-0 grid-rows-[437fr_438fr]">
        <ChartWindow chart={H1} className="-ml-px" />
        <ChartWindow chart={M15} className="mr-0.5 mb-px -ml-px" />
      </div>
      <div className="grid min-w-0 grid-rows-[438fr_437fr]">
        <ChartWindow chart={DAILY} tall />
        <ChartWindow chart={H4} className="mr-px" />
      </div>
      <div className="grid min-w-0 grid-rows-[437fr_438fr]">
        <ChartWindow chart={MONTHLY} />
        <ChartWindow chart={WEEKLY} active className="mb-px -ml-px" />
      </div>
    </main>
  );
}
